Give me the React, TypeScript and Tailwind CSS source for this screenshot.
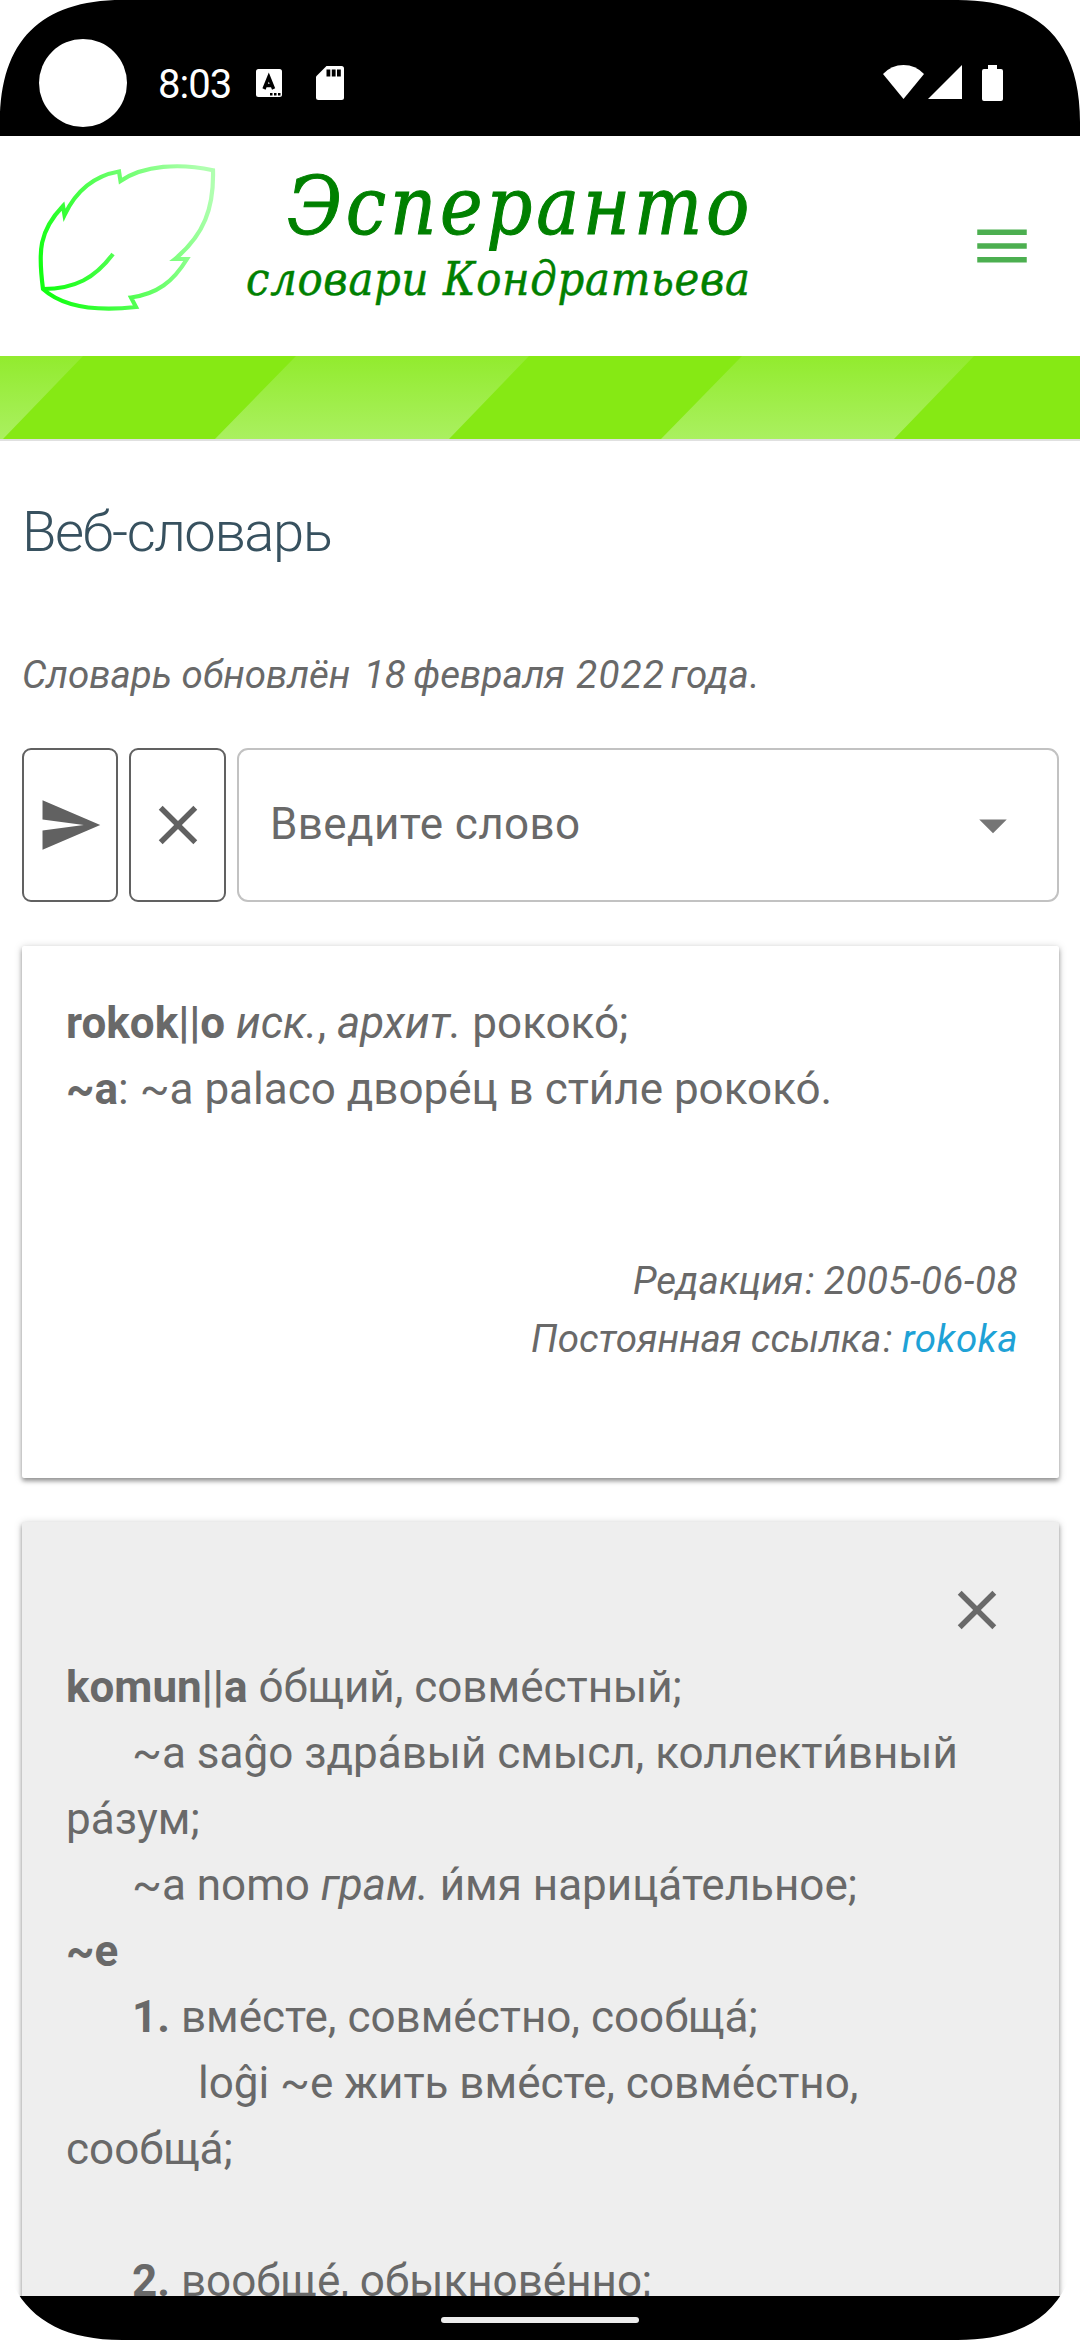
import type { ReactNode } from "react";

const CLOSE = "M19 6.41L17.59 5 12 10.59 6.41 5 5 6.41 10.59 12 5 17.59 6.41 19 12 13.41 17.59 19 19 17.59 13.41 12z";

function Icon({ d, className = "" }: { d: string; className?: string }) {
  return (
    <svg viewBox="0 0 24 24" className={`size-[66px] shrink-0 ${className}`} fill="currentColor">
      <path d={d} />
    </svg>
  );
}

function StatusBar() {
  return (
    <div className="flex h-[136px] shrink-0 bg-black text-white">
      <div className="mt-[39px] ml-[39px] size-[88px] rounded-full bg-white" />
      <div className="mt-[60px] ml-[31px] w-[98px] text-[40px] leading-[50px] tracking-[-1px]">8:03</div>
      <svg className="mt-[69px] h-[28px] w-[26px]" viewBox="0 0 26 28">
        <rect width="26" height="28" rx="2.500" fill="#fff" />
        <path d="M8 20 L12.800 8 L17.600 20 M10 16.500 H16" stroke="#000" strokeWidth="3.400" fill="none" />
        <path d="M14 24h2.500v2.500h-2.500zM18 24h2.500v2.500h-2.500zM22 24h2.500v2.500h-2.500z" />
      </svg>
      <svg className="mt-[66px] ml-[34px] h-[34px] w-[28px]" viewBox="0 0 28 34">
        <path d="M10.500 0H25.500Q28 0 28 2.500V31.500Q28 34 25.500 34H2.500Q0 34 0 31.500V10.500Z" fill="#fff" />
        <path d="M10.500 3.500h3.800v7h-3.800zM15.800 3.500h3.800v7h-3.800zM21 3.500h3.800v7h-3.800z" />
      </svg>
      <svg className="mt-[65px] ml-auto h-[34px] w-[41px]" viewBox="0 0 41 34">
        <path d="M0 9Q8.500 0 20.500 0T41 9L20.500 34Z" fill="#fff" />
      </svg>
      <svg className="mt-[65px] ml-1 h-[34px] w-[34px]" viewBox="0 0 34 34">
        <path d="M34 0V34H0Z" fill="#fff" />
      </svg>
      <svg className="mt-[65px] mr-[77px] ml-5 h-[36px] w-[21px]" viewBox="0 0 21 36">
        <path d="M6 0h9v4h4q2 0 2 2v28q0 2-2 2H2q-2 0-2-2V6q0-2 2-2h4z" fill="#fff" />
      </svg>
    </div>
  );
}

function Header() {
  return (
    <header className="flex h-[220px] shrink-0 bg-white">
      <svg className="h-[220px] w-[232px] shrink-0" viewBox="0 0 232 220" fill="none" stroke="url(#leaf)" strokeWidth="4.200">
        <defs>
          <linearGradient id="leaf" gradientUnits="userSpaceOnUse" x1="38" y1="125" x2="212" y2="60">
            <stop offset="0" stopColor="#12ff12" />
            <stop offset="1" stopColor="#b0ffb0" />
          </linearGradient>
        </defs>
        <path d="M43 153C38 115 39 95 63 70L64.500 79C76 55 93 40 119 35.500L120.500 45C144 29 180 27 213 34.300C214 72 204 99 175 123H187C173 146 157 158 131 161.500L136 171C100 175 65 173 43 153Z" />
        <path d="M43 153C75 153 95 142 113 118" />
      </svg>
      <div className="pt-[31px] pl-[14px] font-['DejaVu_Serif_Condensed','DejaVu_Serif',serif] whitespace-nowrap text-[#008000] italic">
        <div className="pl-[41px] text-[80px] leading-[80px] tracking-[3.750px] [-webkit-text-stroke:1px_#008000]">Эсперанто</div>
        <div className="mt-[2px] text-[46.5px] leading-[60px] tracking-[0.700px] [-webkit-text-stroke:0.5px_#008000]">словари Кондратьева</div>
      </div>
      <Icon d="M3 18h18v-2H3v2zm0-5h18v-2H3v2zm0-7v2h18V6H3z" className="mt-[77px] mr-[45px] ml-auto text-[#4caf50]" />
    </header>
  );
}

function Stripes() {
  return (
    <svg className="block h-[85px] w-full shrink-0 border-b-2 border-[#e0e0e0]" viewBox="0 0 1080 83" preserveAspectRatio="none">
      <defs>
        <linearGradient id="band" x1="0" y1="0" x2="0" y2="1">
          <stop offset="0" stopColor="#92eb2e" />
          <stop offset="1" stopColor="#aaf060" />
        </linearGradient>
      </defs>
      <rect width="1080" height="83" fill="#86e914" />
      <path d="M-150 0H83L3 83H-230ZM296 0H529L449 83H215ZM742 0H974L894 83H661Z" fill="url(#band)" />
    </svg>
  );
}

function Card({ children, className }: { children: ReactNode; className: string }) {
  return (
    <section className={`shrink-0 rounded-[2px] px-11 text-[44px] leading-[66px] shadow-[0_3px_4px_rgba(0,0,0,0.35),0_1px_8px_rgba(0,0,0,0.18)] ${className}`}>
      {children}
    </section>
  );
}

function Corner({ className }: { className: string }) {
  return (
    <svg className={`absolute size-[124px] ${className}`} viewBox="0 0 124 124">
      <path d="M0 0H122C41 0 0 41 0 122Z" fill="#fff" />
    </svg>
  );
}

export default function App() {
  return (
    <div className="relative flex h-[2340px] w-[1080px] flex-col overflow-hidden bg-white font-[Roboto,sans-serif] text-[#696969]">
      <StatusBar />
      <Header />
      <Stripes />
      <main className="flex min-h-0 flex-1 flex-col overflow-hidden pr-[21px] pl-[22px]">
        <h1 className="mt-[54px] text-[56.25px] leading-[74px] font-light tracking-[-1.500px] text-[#37515f]">Веб-словарь</h1>
        <p className="mt-[77px] text-[38.5px] leading-[58px] italic">
          Словарь обновлён <span className="mr-[-2px] ml-[4px]">18</span> февраля{" "}
          <span className="mr-[-4px] ml-[2px] tracking-[1.250px]">2022</span> года<span className="ml-px">.</span>
        </p>
        <div className="mt-[44px] flex h-[154px] shrink-0 gap-[11px] text-[#616161]">
          <button className="flex w-[96px] items-center justify-center rounded-[9px] border-2 border-[#616161]">
            <Icon d="M2.01 21L23 12 2.01 3 2 10l15 2-15 2z" />
          </button>
          <button className="flex w-[97px] items-center justify-center rounded-[9px] border-2 border-[#616161]">
            <Icon d={CLOSE} />
          </button>
          <div className="flex flex-1 items-center rounded-[11px] border-2 border-[#c2c2c2] pr-[31px] pl-[31px] text-[44px] text-[#696969]">
            <span className="mb-[2px] flex-1 tracking-[0.400px]">Введите слово</span>
            <Icon d="M7 10l5 5 5-5z" className="text-[#757575]" />
          </div>
        </div>
        <Card className="mt-11 h-[532px] bg-white pt-11">
          <p><b>rokok||o</b> <i>иск.</i>, <i>архит.</i> рококо́;</p>
          <p><b>~a</b>: ~a palaco дворе́ц в сти́ле рококо́.</p>
          <div className="mt-[130px] mr-[-3px] text-right text-[38.5px] leading-[57.75px] italic">
            <p>Редакция<span className="ml-[2px]">:</span> <span className="tracking-[0.550px]">2005-06-08</span></p>
            <p>Постоянная ссылка<span className="ml-[2px]">:</span> <a className="tracking-[0.500px] text-[#1fa2d6]">rokoka</a></p>
          </div>
        </Card>
        <Card className="mt-11 h-[900px] bg-[#eeeeee] pt-[55px]">
          <div className="flex h-[77px] justify-end pr-[5px]">
            <Icon d={CLOSE} />
          </div>
          <p><b>komun||a</b> о́бщий, совме́стный;</p>
          <p className="indent-[66px]">~a saĝo здра́вый смысл, коллекти́вный ра́зум;</p>
          <p className="indent-[66px]">~a nomo <i>грам.</i> и́мя нарица́тельное;</p>
          <p><b>~e</b></p>
          <p className="indent-[66px]"><b>1.</b> вме́сте, совме́стно, сообща́;</p>
          <p className="indent-[132px]">loĝi ~e жить вме́сте, совме́стно, сообща́;</p>
          <p className="mt-[66px] indent-[66px]"><b>2.</b> вообще́, обыкнове́нно;</p>
        </Card>
      </main>
      <nav className="flex h-11 shrink-0 justify-center bg-black">
        <div className="mt-[21px] h-[6px] w-[198px] rounded-full bg-[#ececec]" />
      </nav>
      <Corner className="top-0 left-0" />
      <Corner className="top-0 right-0 -scale-x-100" />
      <Corner className="bottom-0 left-0 -scale-y-100" />
      <Corner className="right-0 bottom-0 rotate-180" />
    </div>
  );
}
